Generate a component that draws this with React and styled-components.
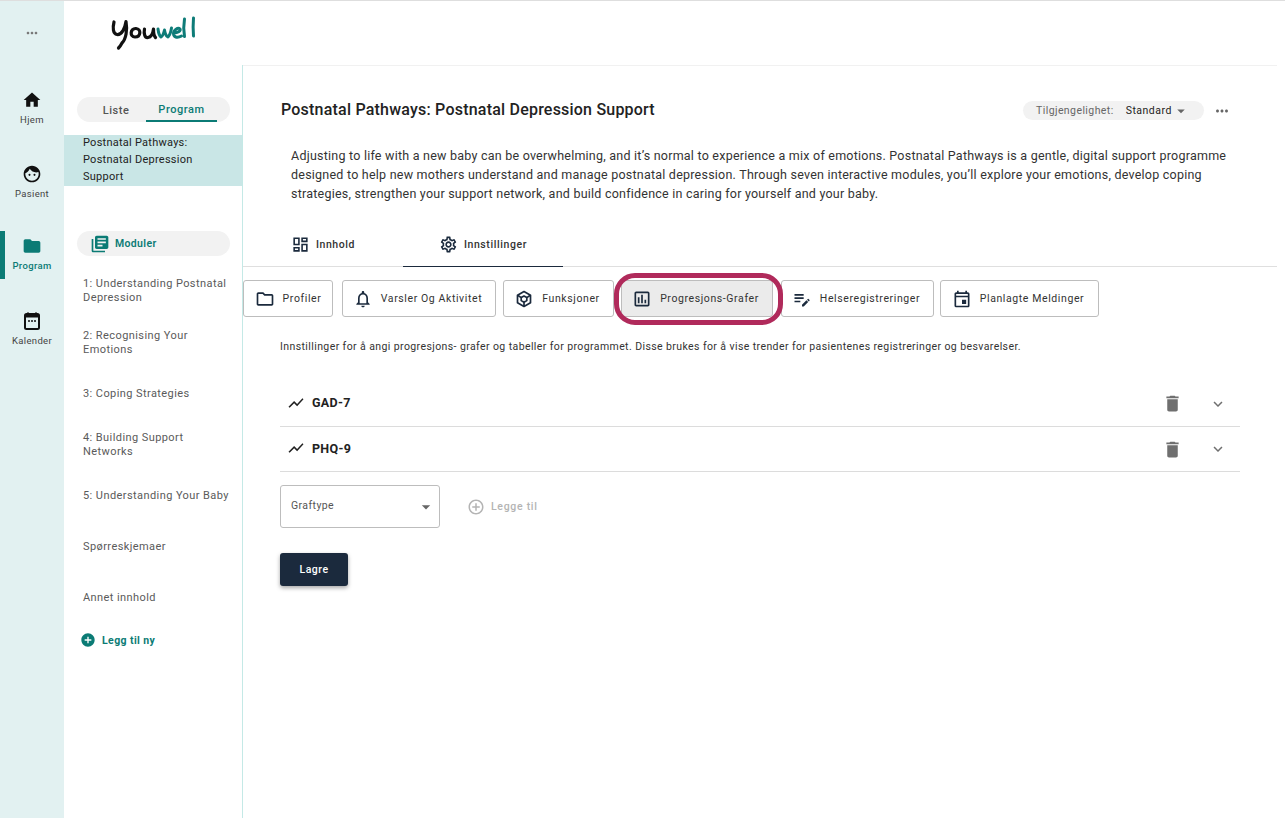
import React from "react";
import styled, { createGlobalStyle } from "styled-components";
import {
  MdHome, MdFace, MdFolder, MdMoreHoriz, MdLibraryBooks, MdAddCircle, MdOutlineDashboard,
  MdOutlineSettings, MdOutlineFolder, MdOutlineNotifications, MdOutlineAssessment, MdOutlineEditNote,
  MdOutlineEvent, MdShowChart, MdDelete, MdExpandMore, MdArrowDropDown, MdAddCircleOutline,
} from "react-icons/md";

const Global = createGlobalStyle`
  html, body { margin: 0; padding: 0; background: #fff; }
  body { font-family: Roboto, "Liberation Sans", sans-serif; color: #2b2b2b; overflow: hidden; }
  * { box-sizing: border-box; }
`;

const Page = styled.div`
  display: flex; width: 1285px; height: 818px; border-top: 1px solid #dedede;
`;
const Rail = styled.nav`
  width: 64px; flex: none; background: #e2f1f1; display: flex; flex-direction: column; align-items: stretch;
`;
const RailMore = styled.div`
  height: 63px; display: flex; align-items: center; justify-content: center; color: #777; font-size: 16px;
`;
const RailItem = styled.div`
  height: 48px; margin-top: ${p => p.$mt}px; display: flex; flex-direction: column; align-items: center; justify-content: center; gap: 4px;
  font-size: 9.5px; letter-spacing: .35px; font-weight: ${p => (p.$active ? 500 : 400)};
  color: ${p => (p.$active ? "#0b7b75" : "#444")};
  border-left: ${p => (p.$active ? "5px solid #0b7b75" : "0")};
  padding: ${p => (p.$active ? "0 5px 4px 0" : "0")};
  svg { width: 20px; height: 20px; font-size: 20px; color: ${p => (p.$active ? "#0b7b75" : "#111")}; }
`;
const Body = styled.div`
  flex: 1; display: flex; flex-direction: column; min-width: 0;
`;
const TopBar = styled.header`
  height: 64px; flex: none; padding: 14px 0 0 46px;
`;
const Columns = styled.div`
  flex: 1; display: flex; min-height: 0;
`;
const Side = styled.aside`
  width: 179px; flex: none; border-right: 1px solid #c4e9e6; display: flex; flex-direction: column; padding-top: 32px;
`;
const Switch = styled.div`
  height: 25px; margin: 0 12px 0 13px; border-radius: 13px; background: #f2f2f2; display: flex; padding-left: 12px;
`;
const SwitchTab = styled.div`
  width: ${p => p.$w}px; display: flex; align-items: center; justify-content: center; padding: 1px ${p => p.$pr || 0}px 0 0; font-size: 11px; font-weight: 500; letter-spacing: .55px;
  color: ${p => (p.$active ? "#0b7b75" : "#555")};
  border-bottom: ${p => (p.$active ? "2px solid #0b7b75" : "0")};
`;
const Selected = styled.div`
  margin-top: 13px; background: #c9e6e6; height: 51px; padding-left: 19px;
`;
const SelectedText = styled.div`
  margin-top: -1px; font-size: 11px; line-height: 17px; letter-spacing: .25px; color: #222;
`;
const ModPill = styled.div`
  height: 25px; margin: 45px 12px 0 13px; border-radius: 13px; background: #f2f2f2; display: flex; align-items: center; gap: 5px; padding-left: 13px;
  color: #0b7b75; font-size: 10.5px; font-weight: 600; letter-spacing: .35px;
  svg { font-size: 20px; }
`;
const Mod = styled.div`
  height: ${p => p.$h}px; padding: 0 12px 0 19px; margin-top: ${p => p.$mt || 0}px;
  font-size: 11px; line-height: 14px; letter-spacing: .42px; color: #5a5a5a;
`;
const AddNew = styled.div`
  margin-top: 16px; padding-left: 16px; display: flex; align-items: center; gap: 6px; color: #0b7b75; font-size: 10.5px; font-weight: 700; letter-spacing: .4px;
  svg { font-size: 16px; }
`;
const Main = styled.main`
  flex: 1; min-width: 0; position: relative; border-top: 1px solid #f1f1f1; margin-right: 8px;
`;
const TitleRow = styled.div`
  height: 80px; display: flex; align-items: center; justify-content: space-between; padding: 8px 45px 0 38px;
`;
const Title = styled.h1`
  margin: 0 0 2px; font-size: 16px; font-weight: 500; color: #222; letter-spacing: .21px;
`;
const TitleRight = styled.div`
  display: flex; align-items: center; gap: 9px; color: #666; padding: 1px 1px 0 0;
  svg { font-size: 18px; }
`;
const Avail = styled.div`
  width: 181px; height: 19px; border-radius: 10px; background: #f2f2f2; display: flex; align-items: center; padding-left: 13px; font-size: 10.5px; letter-spacing: .42px; color: #666;
  b { font-weight: 400; color: #222; margin-left: 12px; letter-spacing: .5px; }
  svg { font-size: 18px; color: #666; margin-left: 0; }
`;
const Desc = styled.p`
  margin: 0; padding: 0 37px 0 48px; font-size: 12.5px; line-height: 19px; letter-spacing: .23px; color: #333; height: 59px;
`;
const Tabs = styled.div`
  margin-top: 28px; height: 34px; display: flex; border-bottom: 1px solid #dfdfdf;
`;
const Tab = styled.div`
  width: ${p => p.$w}px; display: flex; align-items: center; justify-content: center; gap: 6px; padding-bottom: 11px;
  font-size: 10.5px; font-weight: 500; letter-spacing: .6px; color: #333; height: 34px;
  border-bottom: 1px solid ${p => (p.$active ? "#1b2a3d" : "transparent")};
  svg { font-size: 19px; color: #1b2a3d; }
`;
const Buttons = styled.div`
  display: flex; margin-top: 13px; position: relative;
`;
const Btn = styled.div`
  height: 37px; width: ${p => p.$w}px; margin-right: ${p => p.$gap}px; flex: none; border: 1px solid #bdbdbd; border-radius: 3px;
  display: flex; align-items: center; justify-content: center; gap: 8px; padding-right: ${p => p.$pr ?? 3}px; font-size: 10.5px; letter-spacing: .6px; color: #333;
  background: ${p => (p.$active ? "#ebebeb" : "#fff")};
  svg { font-size: 20px; color: #1b2a3d; flex: none; }
`;
const Ring = styled.div`
  position: absolute; left: 371px; top: -7px; width: 169px; height: 52px; border: 5px solid #b02a5b; border-radius: 21px; pointer-events: none;
`;
const Info = styled.p`
  margin: 23px 0 0 37px; font-size: 10.5px; line-height: 14px; letter-spacing: .405px; color: #333;
`;
const Accordion = styled.div`
  margin: 27px 37px 0 37px;
`;
const Row = styled.div`
  height: ${p => p.$h}px; border-bottom: 1px solid #dcdcdc; display: flex; align-items: center; padding: 0 13px 2px 7px; color: #222;
  font-size: 12.5px; font-weight: 700; letter-spacing: .3px;
  span { margin-left: 7px; flex: 1; }
  svg { font-size: 18px; flex: none; }
`;
const Trash = styled(MdDelete)`
  color: #6f6f6f; margin: 2px 26px 0 0; font-size: 21px !important;
`;
const Chevron = styled(MdExpandMore)`
  color: #6f6f6f; margin-top: 2px;
`;
const Controls = styled.div`
  margin: 13px 0 0 37px; display: flex; align-items: center;
`;
const Select = styled.div`
  width: 160px; height: 43px; border: 1px solid #bdbdbd; border-radius: 3px; display: flex; align-items: center; justify-content: space-between; padding: 0 3px 3px 10px;
  font-size: 10.5px; letter-spacing: .42px; color: #555;
  svg { font-size: 20px; color: #666; margin-top: 3px; }
`;
const Add = styled.div`
  margin-left: 27px; display: flex; align-items: center; gap: 6px; font-size: 10.5px; font-weight: 500; letter-spacing: .7px; color: #b4b4b4;
  svg { font-size: 18px; }
`;
const Save = styled.div`
  margin: 25px 0 0 37px; width: 68px; height: 33px; background: #1b2a3d; border-radius: 3px; color: #fff; display: flex; align-items: center; justify-content: center;
  font-size: 10.5px; font-weight: 500; letter-spacing: .5px; box-shadow: 0 2px 4px rgba(0,0,0,.35);
`;

const Logo = () => (
  <svg width="90" height="36" viewBox="0 0 90 36" fill="none" strokeLinecap="round" strokeLinejoin="round" role="img" aria-label="youwell">
    <g stroke="#111" strokeWidth="3.2">
      <path d="M4 7 C2.5 13 3 19 7 19.5 C12 20 15 13 16 6.5 C17.5 15 16 24 12 28 C11 30 9.5 32 8.5 33" />
      <path d="M26 13.5 C20 13 19.5 22 25 22 C31 22 31.5 14 26 13.5 Z" />
      <path d="M34.5 14 C33.5 19 35 23 38 22.5 C41 22 43 18 43.5 14 C43.5 18 44 21 45.5 22.5" />
    </g>
    <g stroke="#0e7c78" strokeWidth="3">
      <path d="M48 14 C48.5 18 49.5 21 51 22 C53 21 54 17 54.5 15 C55 18 56 21 58 22 C60 20 61 16 61.5 13" />
      <path d="M64 18 C67.5 18 71 16 70 14 C68 12 63.5 15 63.5 18.5 C63.5 22 67 23.5 71.5 21" />
      <path d="M74.5 4 C73.5 10 73.5 16 74.5 21.5" />
      <path d="M83.5 3 C83 9 83 15 83.5 21" />
    </g>
  </svg>
);

const CalendarIcon = () => (
  <svg viewBox="0 0 20 20" fill="none">
    <path d="M6 1.5v3M14 1.5v3" stroke="#111" strokeWidth="2" />
    <rect x="3" y="3" width="14" height="15" rx="1.5" stroke="#111" strokeWidth="2" />
    <path d="M3 3.5h14v3H3z" fill="#111" />
    <path d="M6 10h2M9 10h2M12 10h2" stroke="#111" strokeWidth="1.6" />
  </svg>
);

const HexIcon = () => (
  <svg width="20" height="20" viewBox="0 0 20 20" fill="none" stroke="#1b2a3d" strokeWidth="1.7" strokeLinejoin="round">
    <path d="M10 2.5l6.5 3.7v7.6L10 17.5l-6.5-3.7V6.2z" />
    <path d="M10 7l2.8 1.6v3L10 13.2l-2.8-1.6v-3z" />
    <path d="M3.7 6.2L7.2 8.6M16.3 6.2l-3.5 2.4M10 13.2v4" />
  </svg>
);

export default function App() {
  return (
    <Page>
      <Global />
      <Rail>
        <RailMore><MdMoreHoriz /></RailMore>
        <RailItem $mt={19}><MdHome />Hjem</RailItem>
        <RailItem $mt={26}><MdFace />Pasient</RailItem>
        <RailItem $mt={26} $active><MdFolder />Program</RailItem>
        <RailItem $mt={25}><CalendarIcon />Kalender</RailItem>
      </Rail>
      <Body>
        <TopBar><Logo /></TopBar>
        <Columns>
          <Side>
            <Switch>
              <SwitchTab $w={57} $pr={3}>Liste</SwitchTab>
              <SwitchTab $w={71} $active>Program</SwitchTab>
            </Switch>
            <Selected>
              <SelectedText>Postnatal Pathways:<br />Postnatal Depression<br />Support</SelectedText>
            </Selected>
            <ModPill><MdLibraryBooks />Moduler</ModPill>
            <Mod $mt={21} $h={52}>1: Understanding Postnatal Depression</Mod>
            <Mod $h={58}>2: Recognising Your Emotions</Mod>
            <Mod $h={44}>3: Coping Strategies</Mod>
            <Mod $h={58}>4: Building Support Networks</Mod>
            <Mod $h={51}>5: Understanding Your Baby</Mod>
            <Mod $h={51}>Spørreskjemaer</Mod>
            <Mod $h={25}>Annet innhold</Mod>
            <AddNew><MdAddCircle />Legg til ny</AddNew>
          </Side>
          <Main>
            <TitleRow>
              <Title>Postnatal Pathways: Postnatal Depression Support</Title>
              <TitleRight>
                <Avail>Tilgjengelighet:<b>Standard</b><MdArrowDropDown /></Avail>
                <MdMoreHoriz />
              </TitleRight>
            </TitleRow>
            <Desc>Adjusting to life with a new baby can be overwhelming, and it’s normal to experience a mix of emotions. Postnatal Pathways is a gentle, digital support programme designed to help new mothers understand and manage postnatal depression. Through seven interactive modules, you’ll explore your emotions, develop coping strategies, strengthen your support network, and build confidence in caring for yourself and your baby.</Desc>
            <Tabs>
              <Tab $w={160}><MdOutlineDashboard />Innhold</Tab>
              <Tab $w={160} $active><MdOutlineSettings />Innstillinger</Tab>
            </Tabs>
            <Buttons>
              <Btn $w={90} $gap={9} $pr={0}><MdOutlineFolder />Profiler</Btn>
              <Btn $w={154} $gap={7}><MdOutlineNotifications />Varsler Og Aktivitet</Btn>
              <Btn $w={111} $gap={7}><HexIcon />Funksjoner</Btn>
              <Btn $w={152} $gap={8} $active><MdOutlineAssessment />Progresjons-Grafer</Btn>
              <Btn $w={153} $gap={6}><MdOutlineEditNote />Helseregistreringer</Btn>
              <Btn $w={159} $gap={0}><MdOutlineEvent />Planlagte Meldinger</Btn>
              <Ring />
            </Buttons>
            <Info>Innstillinger for å angi progresjons- grafer og tabeller for programmet. Disse brukes for å vise trender for pasientenes registreringer og besvarelser.</Info>
            <Accordion>
              <Row $h={46}><MdShowChart /><span>GAD-7</span><Trash /><Chevron /></Row>
              <Row $h={45}><MdShowChart /><span>PHQ-9</span><Trash /><Chevron /></Row>
            </Accordion>
            <Controls>
              <Select>Graftype<MdArrowDropDown /></Select>
              <Add><MdAddCircleOutline />Legge til</Add>
            </Controls>
            <Save>Lagre</Save>
          </Main>
        </Columns>
      </Body>
    </Page>
  );
}
